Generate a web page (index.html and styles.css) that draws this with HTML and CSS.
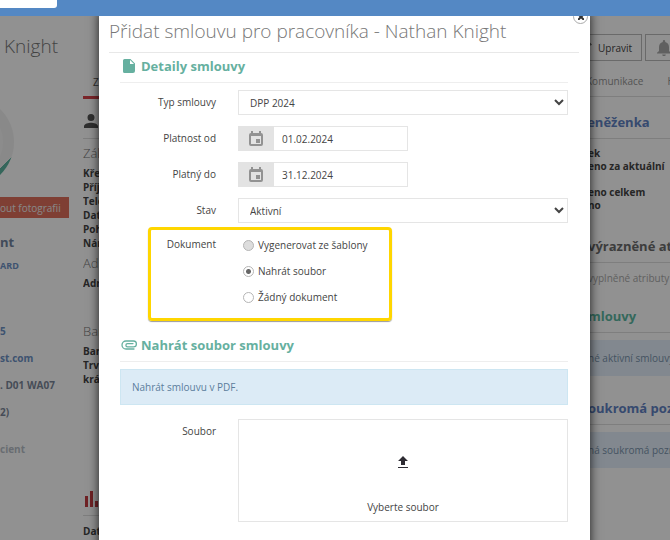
FILE: index.html
```
<!DOCTYPE html>
<html lang="cs">
<head>
    <meta charset="UTF-8">
    <title>Přidat smlouvu</title>
    <link rel="stylesheet" href="styles.css">
</head>
<body>
    <header class="topbar">
        <input class="search" type="text" aria-label="Hledat">
    </header>

    <div class="stage">
        <div class="page">
            <aside class="profile">
                <h1>Knight</h1>
                <div class="photo"></div>
                <button class="btn-photo" type="button">out fotografii</button>
                <h2>nt</h2>
                <a class="role" href="#">ARD</a>
                <a class="phone" href="#">5</a>
                <a class="mail" href="#">st.com</a>
                <p class="place">. D01 WA07</p>
                <p class="age">2)</p>
                <p class="client">cient</p>
            </aside>

            <main class="details">
                <a class="tab-active" href="#">Z</a>
                <div class="icon-head">
                    <svg width="14" height="14" viewBox="4 4 16 16"><path fill="#555" d="M12 12a4 4 0 1 0 0-8 4 4 0 0 0 0 8zm0 2c-2.700 0-8 1.300-8 4v2h16v-2c0-2.700-5.300-4-8-4z"/></svg>
                </div>
                <h3>Zák</h3>
                <p>Kře</p>
                <p>Příj</p>
                <p>Tele</p>
                <p>Dat</p>
                <p>Poh</p>
                <p>Nár</p>
                <h3>Adr</h3>
                <p>Adr</p>
                <h3 class="bank">Ban</h3>
                <p>Ban</p>
                <p>Trv</p>
                <p>krá</p>
                <div class="icon-head stats">
                    <svg width="20" height="16" viewBox="0 0 20 16"><path fill="#c33c42" d="M1 5h3v11H1zM6 0h3v16H6zM11 10h3v6h-3z"/></svg>
                </div>
                <p>Dat</p>
            </main>

            <section class="side">
                <div class="actions">
                    <button class="btn" type="button">
                        <svg width="12" height="12" viewBox="0 0 12 12"><path fill="#777" d="M0 9.500 7.500 2l2.500 2.500L2.500 12H0zM8.200 1.300 9.500 0 12 2.500l-1.300 1.300z"/></svg>
                        Upravit
                    </button>
                    <button class="btn btn-bell" type="button" aria-label="Upozornění">
                        <svg width="14" height="16" viewBox="0 0 14 16"><path fill="#aaa" d="M7 16c1 0 1.800-.7 1.800-1.600H5.200C5.200 15.300 6 16 7 16zm5-5V7c0-2.600-1.400-4.500-3.800-5.100V1.200a1.200 1.200 0 0 0-2.400 0v.7C3.400 2.500 2 4.400 2 7v4L0 12.800v.8h14v-.8z"/></svg>
                    </button>
                </div>
                <nav class="tabs"><a href="#">Komunikace</a><a href="#">H</a></nav>
                <h2 class="blue">Peněženka</h2>
                <ul>
                    <li>ek</li>
                    <li>eno za aktuální</li>
                    <li></li>
                    <li>eno celkem</li>
                    <li>no</li>
                </ul>
                <h2>výrazněné at</h2>
                <p class="empty">vyplněné atributy</p>
                <h2 class="green">mlouvy</h2>
                <p class="note">né aktivní smlouvy</p>
                <h2 class="blue">oukromá poz</h2>
                <p class="note">ná soukromá pozn</p>
            </section>
        </div>

        <div class="backdrop"></div>

        <div class="modal" role="dialog" aria-labelledby="modalTitle">
            <button class="close" type="button" aria-label="Zavřít">
                <svg width="6" height="6" viewBox="0 0 6 6"><path stroke="#333" stroke-width="2" d="M0 0l6 6M6 0 0 6"/></svg>
            </button>
            <h1 id="modalTitle">Přidat smlouvu pro pracovníka - Nathan Knight</h1>

            <form class="content">
                <h2 class="section">
                    <svg width="18" height="16" viewBox="0 0 18 16"><path fill="#66b0a0" d="M4.500 1h6L15 5.500V13a2 2 0 0 1-2 2H4.500a1.500 1.500 0 0 1-1.500-1.500v-11A1.500 1.500 0 0 1 4.500 1z"/><path fill="#fff" d="M10 2v4h4z"/></svg>
                    Detaily smlouvy
                </h2>
                <div class="row">
                    <label for="typ">Typ smlouvy</label>
                    <select id="typ"><option>DPP 2024</option></select>
                </div>
                <div class="row">
                    <label for="od">Platnost od</label>
                    <div class="date">
                        <span class="addon"><svg width="14" height="16" viewBox="0 0 14 16"><path fill="#929292" fill-rule="evenodd" d="M2 0h2v2h6V0h2v2a2 2 0 0 1 2 2v9a2 2 0 0 1-2 2H2a2 2 0 0 1-2-2V4a2 2 0 0 1 2-2zM2 5v8h10V5zM7 8h4v4H7z"/></svg></span>
                        <input id="od" type="text" value="01.02.2024">
                    </div>
                </div>
                <div class="row">
                    <label for="do">Platný do</label>
                    <div class="date">
                        <span class="addon"><svg width="14" height="16" viewBox="0 0 14 16"><path fill="#929292" fill-rule="evenodd" d="M2 0h2v2h6V0h2v2a2 2 0 0 1 2 2v9a2 2 0 0 1-2 2H2a2 2 0 0 1-2-2V4a2 2 0 0 1 2-2zM2 5v8h10V5zM7 8h4v4H7z"/></svg></span>
                        <input id="do" type="text" value="31.12.2024">
                    </div>
                </div>
                <div class="row">
                    <label for="stav">Stav</label>
                    <select id="stav"><option>Aktivní</option></select>
                </div>

                <div class="highlight" role="radiogroup" aria-labelledby="dokument">
                    <span id="dokument" class="group-label">Dokument</span>
                    <div class="radios">
                        <label><input type="radio" name="doc" disabled>Vygenerovat ze šablony</label>
                        <label><input type="radio" name="doc" checked>Nahrát soubor</label>
                        <label><input type="radio" name="doc">Žádný dokument</label>
                    </div>
                </div>

                <h2 class="section">
                    <svg width="18" height="16" viewBox="0 0 18 16"><path fill="none" stroke="#66b0a0" stroke-width="1.300" stroke-linecap="round" d="M14 12H6a4 4 0 0 1 0-8h7.500a2.800 2.800 0 0 1 0 5.800H7.500a1.500 1.500 0 0 1 0-3.200H13"/></svg>
                    Nahrát soubor smlouvy
                </h2>
                <p class="alert">Nahrát smlouvu v PDF.</p>
                <div class="row">
                    <span class="group-label">Soubor</span>
                    <button class="dropzone" type="button">
                        <svg width="12" height="14" viewBox="0 0 12 14"><path fill="#2e2c33" d="M6 1l5 5H8v4H4V6H1zM1 12h10v1H1z"/></svg>
                        <span>Vyberte soubor</span>
                    </button>
                </div>
            </form>
        </div>
    </div>
</body>
</html>
```

FILE: styles.css
```
* {
    box-sizing: border-box;
}
body {
    margin: 0;
    height: 100vh;
    overflow: hidden;
    display: flex;
    flex-direction: column;
    font-family: "Open Sans", sans-serif;
    font-size: 10px;
    color: #444;
    background: #fff;
}
h1, h2, h3, p, ul {
    margin: 0;
    padding: 0;
}
h1, h3 {
    font-weight: 300;
    color: #777;
}
a {
    text-decoration: none;
}
button, input, select {
    font-family: inherit;
    font-size: 10px;
    color: #444;
}
svg {
    flex: none;
}

/* top bar */
.topbar {
    flex: none;
    height: 16px;
    background: #5488c4;
    display: flex;
    align-items: flex-end;
    padding-bottom: 8px;
}
.search {
    width: 57px;
    height: 16px;
    border: none;
    border-radius: 0 0 3px 0;
    background: #fff;
}

.stage {
    position: relative;
    flex: 1;
    min-height: 0;
    overflow: hidden;
}

/* page under the dialog */
.page {
    display: grid;
    grid-template-columns: 83px 1fr 82px;
    height: 100%;
    white-space: nowrap;
}
.profile {
    display: flex;
    flex-direction: column;
    align-items: flex-start;
    overflow: hidden;
}
.profile h1 {
    font-size: 19px;
    line-height: 28px;
    margin: 16px 0 0 4px;
}
.photo {
    width: 92px;
    height: 92px;
    margin: 36px 0 0 -78px;
    flex: none;
    border-radius: 50%;
    border: 11px solid rgba(0, 0, 0, 0.02);
    background: linear-gradient(135deg, #f6f6f6 82%, #5fb8a4 82%);
    background-origin: border-box;
    background-clip: border-box;
}
.btn-photo {
    height: 21px;
    margin: 9px 0 1px;
    padding: 0 8px 0 0;
    border: none;
    background: #e0705c;
    color: #eee;
}
.profile h2 {
    font-size: 13px;
    line-height: 20px;
    margin-top: 13px;
    color: #72849f;
}
.profile a, .profile p {
    line-height: 16px;
    font-weight: 700;
    color: #6d92c6;
}
.profile .role {
    font-size: 9px;
    margin-top: 6px;
}
.profile .phone {
    margin-top: 49px;
}
.profile .mail {
    margin-top: 11px;
}
.profile p {
    color: #7b8799;
    margin-top: 11px;
}
.profile .client {
    margin-top: 21px;
    color: #b8bfc8;
}

.details {
    padding-top: 56px;
    overflow: hidden;
}
.details p {
    line-height: 14px;
    font-weight: 700;
    color: #444;
}
.details h3 {
    font-size: 13px;
    line-height: 26px;
}
.details .bank {
    margin-top: 28px;
}
.tab-active {
    display: block;
    height: 27px;
    padding-left: 10px;
    line-height: 20px;
    border-bottom: 3px solid #d9434a;
    color: #555;
}
.icon-head {
    display: flex;
    align-items: center;
    height: 40px;
    padding: 4px 0 0 1px;
    border-bottom: 1px solid #ddd;
    margin-bottom: 1px;
}
.stats {
    height: 34px;
    padding-top: 0;
    margin: 96px 0 8px;
}

.side {
    padding-top: 18px;
}
.actions {
    display: flex;
    gap: 3px;
    margin-left: -17px;
}
.btn {
    flex: none;
    display: flex;
    align-items: center;
    gap: 6px;
    height: 27px;
    padding: 0 9px 0 8px;
    border: 1px solid #bbb;
    background: none;
}
.btn-bell {
    padding: 0 11px;
}
.tabs {
    display: flex;
    gap: 24px;
    padding-top: 6px;
    line-height: 29px;
    margin-left: -2px;
    border-bottom: 1px solid #ddd;
}
.tabs a {
    color: #949494;
}
.side h2 {
    font-size: 13px;
    line-height: 32px;
    height: 33px;
    border-bottom: 1px solid #ddd;
    color: #6c6c6c;
}
.side .blue {
    color: #5f82c4;
    margin-top: 9px;
}
.side .blue:first-of-type {
    text-indent: -9px;
}
.side .green {
    color: #5cb8a2;
}
.side ul {
    list-style: none;
    height: 91px;
    padding-top: 8px;
    font-weight: 700;
    line-height: 13px;
}
.side li {
    height: 13px;
}
.empty {
    line-height: 16px;
    padding: 7px 0 14px;
    color: #aaa;
}
.note {
    margin: 7px 0 16px;
    line-height: 36px;
    background: #e4f0fb;
    color: #7a93ad;
}

.backdrop {
    position: absolute;
    inset: 0;
    background: rgba(0, 0, 0, 0.43);
}

/* dialog */
.modal {
    position: absolute;
    top: -4px;
    bottom: -20px;
    left: 99px;
    right: 80px;
    padding: 4px 11px 0 10px;
    background: #fff;
    box-shadow: 0 0 10px rgba(0, 0, 0, 0.8);
}
.modal h1 {
    font-size: 19px;
    line-height: 30px;
    height: 37px;
    border-bottom: 1px solid #e8e8e8;
}
.close {
    position: absolute;
    top: -3px;
    right: 2px;
    width: 15px;
    height: 15px;
    padding: 0;
    display: flex;
    align-items: center;
    justify-content: center;
    border: 1px solid #aaa;
    border-radius: 50%;
    background: #fff;
}
.content {
    display: flex;
    flex-direction: column;
    gap: 11px;
    padding: 0 11px;
}
.section {
    display: flex;
    align-items: center;
    gap: 3px;
    height: 30px;
    margin-bottom: -4px;
    padding-bottom: 3px;
    border-bottom: 1px solid #eee;
    font-size: 13px;
    font-weight: 700;
    color: #66b0a0;
}
.row {
    display: grid;
    grid-template-columns: 96px 1fr;
    column-gap: 22px;
}
.row > label, .group-label {
    line-height: 25px;
    text-align: right;
}
.row select {
    width: 100%;
    height: 25px;
    padding: 0 0 0 7px;
    border: 1px solid #e5e5e5;
    background: #fff;
}
.date {
    display: flex;
    width: 170px;
    height: 25px;
}
.addon {
    width: 36px;
    display: flex;
    align-items: center;
    justify-content: center;
    background: #e3e3e3;
}
.date input {
    flex: 1;
    min-width: 0;
    padding: 0 8px;
    border: 1px solid #e5e5e5;
    border-left: none;
}
.highlight {
    display: flex;
    width: 244px;
    margin: -7px 0 0 28px;
    padding: 2px 0 8px;
    border: 3px solid #ffd600;
    border-radius: 4px;
    box-shadow: 0 1px 1px rgba(0, 0, 0, 0.4);
}
.highlight .group-label {
    width: 65px;
    margin-right: 27px;
}
.radios label {
    display: flex;
    align-items: center;
    gap: 4px;
    height: 26px;
}
.radios input {
    appearance: none;
    width: 11px;
    height: 11px;
    margin: 0;
    border: 1px solid #b5b5b5;
    border-radius: 50%;
}
.radios input:disabled {
    background: #ddd;
}
.radios input:checked {
    background: radial-gradient(circle, #666 2px, #fff 3px);
}
.alert {
    margin-bottom: 3px;
    padding: 0 11px;
    line-height: 34px;
    border: 1px solid #cde6f2;
    background: #dcebf6;
    color: #5b7d9c;
}
.dropzone {
    display: flex;
    flex-direction: column;
    align-items: center;
    justify-content: space-between;
    height: 103px;
    padding: 35px 0 6px;
    border: 1px solid #e5e5e5;
    background: #fff;
    line-height: 16px;
}
```
